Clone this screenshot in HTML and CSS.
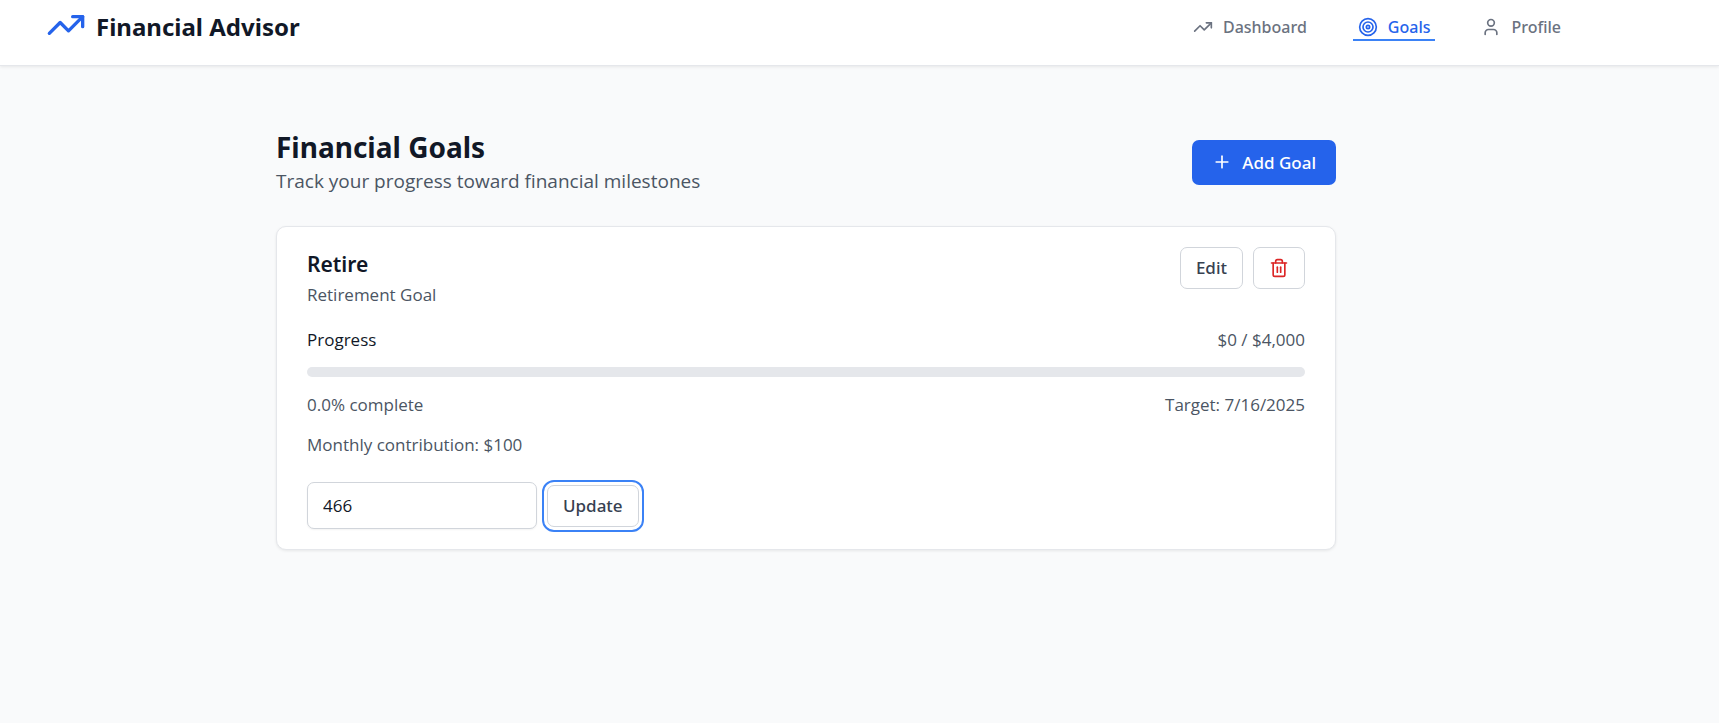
FILE: index.html
```html
<!DOCTYPE html>
<html lang="en">
<head>
<meta charset="utf-8">
<meta name="viewport" content="width=device-width, initial-scale=1">
<title>Financial Advisor</title>
<link rel="stylesheet" href="styles.css">
</head>
<body>
<header class="navbar">
  <a class="brand" href="#">
    <svg class="brand-icon" viewBox="0 0 24 24" aria-hidden="true"><polyline points="22 7 13.5 15.5 8.5 10.5 2 17"/><polyline points="16 7 22 7 22 13"/></svg>
    <span>Financial Advisor</span>
  </a>
  <nav class="nav-links">
    <a class="nav-link" href="#">
      <svg class="icon" viewBox="0 0 24 24" aria-hidden="true"><polyline points="22 7 13.5 15.5 8.5 10.5 2 17"/><polyline points="16 7 22 7 22 13"/></svg>
      <span>Dashboard</span>
    </a>
    <a class="nav-link active" href="#" aria-current="page">
      <svg class="icon" viewBox="0 0 24 24" aria-hidden="true"><circle cx="12" cy="12" r="10"/><circle cx="12" cy="12" r="6"/><circle cx="12" cy="12" r="2"/></svg>
      <span>Goals</span>
    </a>
    <a class="nav-link" href="#">
      <svg class="icon" viewBox="0 0 24 24" aria-hidden="true"><path d="M19 21v-2a4 4 0 0 0-4-4H9a4 4 0 0 0-4 4v2"/><circle cx="12" cy="7" r="4"/></svg>
      <span>Profile</span>
    </a>
  </nav>
</header>
<main class="page">
  <div class="content">
    <div class="page-head">
      <div>
        <h1 class="title">Financial Goals</h1>
        <p class="subtitle">Track your progress toward financial milestones</p>
      </div>
      <button class="btn-primary" type="button">
        <svg class="icon" viewBox="0 0 24 24" aria-hidden="true"><path d="M5 12h14"/><path d="M12 5v14"/></svg>
        <span>Add Goal</span>
      </button>
    </div>
    <section class="card">
      <div class="card-head">
        <div>
          <h2 class="goal-name">Retire</h2>
          <p class="muted">Retirement Goal</p>
        </div>
        <div class="actions">
          <button class="btn" type="button">Edit</button>
          <button class="btn btn-delete" type="button" aria-label="Delete goal">
            <svg class="icon" viewBox="0 0 24 24" aria-hidden="true"><path d="M3 6h18"/><path d="M19 6v14c0 1-1 2-2 2H7c-1 0-2-1-2-2V6"/><path d="M8 6V4c0-1 1-2 2-2h4c1 0 2 1 2 2v2"/><path d="M10 11v6"/><path d="M14 11v6"/></svg>
          </button>
        </div>
      </div>
      <div class="row">
        <span class="label">Progress</span>
        <span class="muted">$0 / $4,000</span>
      </div>
      <div class="track" role="progressbar" aria-label="Progress" aria-valuemin="0" aria-valuemax="4000" aria-valuenow="0"><div class="fill" style="width: 0%"></div></div>
      <div class="row">
        <span class="muted">0.0% complete</span>
        <span class="muted">Target: 7/16/2025</span>
      </div>
      <p class="muted monthly">Monthly contribution: $100</p>
      <form class="update">
        <input class="amount" type="text" inputmode="decimal" value="466" aria-label="Current amount">
        <button class="btn focused" type="button">Update</button>
      </form>
    </section>
  </div>
</main>
</body>
</html>
```
FILE: styles.css
```css
* { box-sizing: border-box; }
body {
  margin: 0;
  min-height: 100vh;
  background: #f9fafb;
  color: #111827;
  font-family: "Segoe UI", "Open Sans", "Noto Sans", sans-serif;
  font-size: 17px;
  line-height: 25px;
}
h1, h2, p { margin: 0; }
a { color: inherit; text-decoration: none; }
button, input { font: inherit; }
.brand, .nav-link, .title, .goal-name, .btn, .btn-primary {
  font-family: "Segoe UI", "Noto Sans", sans-serif;
}
svg {
  display: block;
  flex: none;
  fill: none;
  stroke: currentColor;
  stroke-width: 2;
  stroke-linecap: round;
  stroke-linejoin: round;
}
.icon { width: 20px; height: 20px; }

.navbar {
  display: flex;
  justify-content: space-between;
  align-items: flex-start;
  padding: 5px 153px 16px 46px;
  background: #fff;
  border-bottom: 1px solid #e5e7eb;
  box-shadow: 0 1px 3px rgba(0, 0, 0, 0.08);
}
.brand {
  display: flex;
  gap: 10px;
  font-size: 24px;
  font-weight: 700;
  line-height: 44px;
}
.brand-icon { width: 40px; height: 40px; color: #2563eb; }
.nav-links { display: flex; gap: 41px; padding-top: 10px; }
.nav-link {
  display: flex;
  align-items: center;
  gap: 10px;
  padding: 0 5px;
  border-bottom: 2px solid transparent;
  color: #6b7280;
  font-size: 16px;
  font-weight: 500;
  line-height: 24px;
}
.nav-link.active { color: #2563eb; border-color: #3b82f6; }

.page { padding: 62px 137px 40px 30px; }
.content { max-width: 1060px; margin: 0 auto; }
.page-head {
  display: flex;
  justify-content: space-between;
  align-items: center;
  margin-bottom: 30px;
}
.title { font-size: 28px; font-weight: 700; line-height: 38px; }
.subtitle { font-size: 19px; line-height: 30px; color: #4b5563; }
.btn-primary {
  display: flex;
  align-items: center;
  gap: 10px;
  padding: 10px 20px;
  border: 0;
  border-radius: 7px;
  background: #2563eb;
  color: #fff;
  font-weight: 500;
}

.card {
  padding: 20px 30px;
  background: #fff;
  border: 1px solid #e5e7eb;
  border-radius: 10px;
  box-shadow: 0 1px 3px rgba(0, 0, 0, 0.08);
}
.card-head {
  display: flex;
  justify-content: space-between;
  align-items: flex-start;
  margin-bottom: 20px;
}
.goal-name { font-size: 21px; font-weight: 600; line-height: 35px; }
.muted { color: #4b5563; }
.actions { display: flex; gap: 10px; }
.btn {
  padding: 8px 15px;
  background: #fff;
  border: 1px solid #d1d5db;
  border-radius: 7px;
  color: #374151;
  font-weight: 500;
  line-height: 24px;
}
.btn-delete { display: flex; align-items: center; color: #dc2626; }
.row { display: flex; justify-content: space-between; }
.track {
  height: 10px;
  margin: 15px 0;
  border-radius: 5px;
  background: #e5e7eb;
  overflow: hidden;
}
.fill { height: 100%; background: #2563eb; }
.monthly { margin: 15px 0 25px; }
.update { display: flex; align-items: center; gap: 10px; }
.amount {
  width: 230px;
  padding: 10px 15px;
  background: #fff;
  border: 1px solid #d1d5db;
  border-radius: 7px;
  color: #111827;
  box-shadow: 0 1px 2px rgba(0, 0, 0, 0.05);
}
.focused { outline: 2px solid #3b82f6; outline-offset: 3px; }
```
